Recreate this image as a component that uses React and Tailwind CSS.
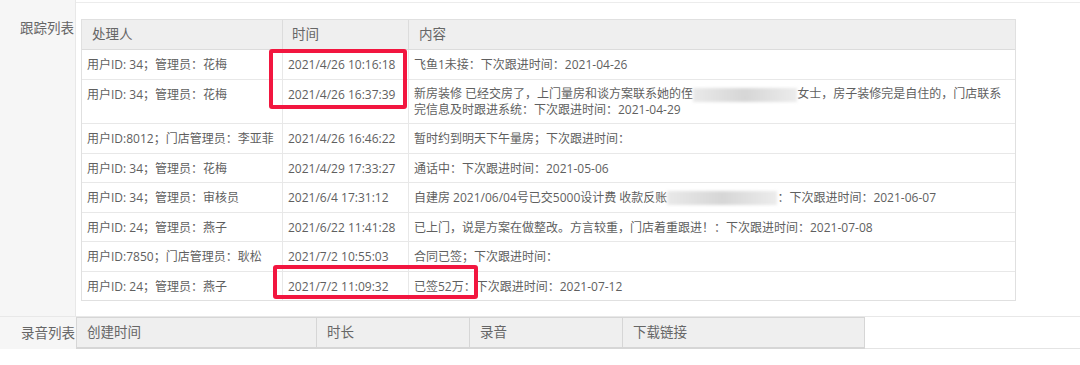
const rows = [
  { who: "用户ID: 34；管理员：花梅", time: "2021/4/26 10:16:18", h: "h-[29px]", body: "飞鱼1未接：下次跟进时间：2021-04-26" },
  {
    who: "用户ID: 34；管理员：花梅",
    time: "2021/4/26 16:37:39",
    h: "h-[44px]",
    top: true,
    body: (
      <>
        新房装修 已经交房了，上门量房和谈方案联系她的侄
        <Blur w="w-[104px]" />
        女士，房子装修完是自住的，门店联系
        <br />
        完信息及时跟进系统：下次跟进时间：2021-04-29
      </>
    ),
  },
  { who: "用户ID:8012；门店管理员：李亚菲", time: "2021/4/26 16:46:22", h: "h-[30px]", body: "暂时约到明天下午量房；下次跟进时间：" },
  { who: "用户ID: 34；管理员：花梅", time: "2021/4/29 17:33:27", h: "h-[29px]", body: "通话中：下次跟进时间：2021-05-06" },
  {
    who: "用户ID: 34；管理员：审核员",
    time: "2021/6/4 17:31:12",
    h: "h-[30px]",
    body: (
      <>
        自建房 2021/06/04号已交5000设计费 收款反账
        <Blur w="w-[110px]" />
        ：下次跟进时间：2021-06-07
      </>
    ),
  },
  { who: "用户ID: 24；管理员：燕子", time: "2021/6/22 11:41:28", h: "h-[29px]", body: "已上门，说是方案在做整改。方言较重，门店着重跟进！：下次跟进时间：2021-07-08" },
  { who: "用户ID:7850；门店管理员：耿松", time: "2021/7/2 10:55:03", h: "h-[30px]", body: "合同已签；下次跟进时间：" },
  { who: "用户ID: 24；管理员：燕子", time: "2021/7/2 11:09:32", h: "h-[29px]", body: "已签52万：下次跟进时间：2021-07-12" },
];

function Blur({ w }) {
  return (
    <span
      className={`inline-block ${w} h-[14px] align-middle bg-gradient-to-r from-[#e9e9e9] via-[#d6d6d6] to-[#ececec] blur-[1.5px]`}
    />
  );
}

export default function App() {
  return (
    <div
      className="relative w-[1080px] h-[365px] bg-white text-[#5f5f5f] overflow-hidden"
      style={{ fontFamily: '"Open Sans", "Noto Sans CJK SC", sans-serif' }}
    >
      {/* 跟踪列表 */}
      <div className="flex h-[316px]">
        <div className="w-[76px] shrink-0 bg-[#f6f6f6] border-r border-[#e8e8e8] pt-[18px] pr-[1px] text-right text-[13.5px] text-[#666]">
          跟踪列表
        </div>
        <div className="flex-1 mt-[2px] border-t border-[#ececec] pt-[16px] pl-[5px]">
          <div className="w-[935px] border border-[#e0e0e0] text-[12px]">
            <div className="flex h-[30px] bg-[#efefef] border-b border-[#dcdcdc] text-[13.5px] text-[#666] items-center">
              <div className="w-[201px] h-full flex items-center pl-[10px] border-r border-[#dcdcdc]">处理人</div>
              <div className="w-[126px] h-full flex items-center pl-[9px] border-r border-[#dcdcdc]">时间</div>
              <div className="flex-1 pl-[10px]">内容</div>
            </div>
            {rows.map((r, i) => (
              <div key={i} className={`flex ${r.h} ${i > 0 ? "border-t border-[#e8e8e8]" : ""}`}>
                <div className={`w-[201px] flex pl-[5px] border-r border-[#e8e8e8] whitespace-nowrap leading-[15px] ${r.top ? "items-start pt-[7px]" : "items-center"}`}>
                  {r.who}
                </div>
                <div className={`w-[126px] flex pl-[5px] border-r border-[#e8e8e8] whitespace-nowrap leading-[15px] ${r.top ? "items-start pt-[7px]" : "items-center"}`}>
                  {r.time}
                </div>
                <div className="flex-1 flex items-center pl-[5px] leading-[15px] whitespace-nowrap">
                  <div>{r.body}</div>
                </div>
              </div>
            ))}
          </div>
        </div>
      </div>

      {/* 录音列表 */}
      <div className="flex h-[33px] border-t border-[#e8e8e8]">
        <div className="w-[76px] shrink-0 bg-[#f6f6f6] flex items-center justify-end pr-[1px] text-[13.5px] text-[#666]">
          录音列表
        </div>
        <div className="flex w-[789px] bg-[#efefef] border border-[#d6d6d6] border-b-2 text-[13.5px] text-[#666]">
          <div className="w-[240px] flex items-center pl-[10px] border-r border-[#d6d6d6]">创建时间</div>
          <div className="w-[153px] flex items-center pl-[10px] border-r border-[#d6d6d6]">时长</div>
          <div className="w-[153px] flex items-center pl-[10px] border-r border-[#d6d6d6]">录音</div>
          <div className="flex-1 flex items-center pl-[10px]">下载链接</div>
        </div>
        <div className="flex-1 border-b border-[#e4e4e4]" />
      </div>

      {/* red annotations */}
      <div className="absolute left-[269px] top-[49px] w-[138px] h-[60px] border-[4px] border-[#f2163f] rounded-[3px]" />
      <div className="absolute left-[273px] top-[265px] w-[205px] h-[34px] border-[4px] border-[#f2163f] rounded-[3px]" />
    </div>
  );
}
